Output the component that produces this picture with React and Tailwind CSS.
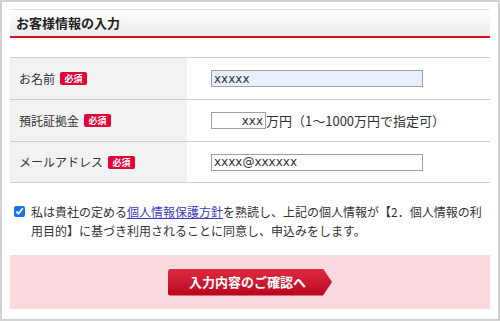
import React from "react";

function Badge() {
  return (
    <span className="ml-[5px] inline-flex h-[13px] w-[27px] items-center justify-center rounded-[2px] bg-[#e4003b] text-[9px] font-bold leading-none text-white">
      必須
    </span>
  );
}

function Row({ label, children, last }) {
  return (
    <div className={`flex h-[42px] border-t border-[#cfcfcf] ${last ? "border-b" : ""}`}>
      <div className="flex w-[177px] items-center bg-[#f2f2f2] pl-[9px] text-[12px] text-[#333]">
        <span>{label}</span>
        <Badge />
      </div>
      <div className="flex flex-1 items-center pl-[24px] text-[13px] text-[#333]">{children}</div>
    </div>
  );
}

const inputBase =
  "box-border h-[17px] border border-[#a0a0a0] px-[2px] font-['DejaVu_Sans',sans-serif] text-[12px] text-[#333] outline-none";

export default function App() {
  return (
    <div className="box-border flex h-[321px] w-[500px] flex-col border-2 border-[#d2d2d2] bg-white px-[8px] pt-[7px] font-['Noto_Sans_CJK_JP',sans-serif] text-[#333]">
      <div className="box-border flex h-[29px] items-center border-t border-b-2 border-t-[#e2e2e2] border-b-[#d3111f] bg-gradient-to-b from-white to-[#ebebeb] pl-[6px] text-[13px] font-bold text-[#222]">
        お客様情報の入力
      </div>

      <div className="mt-[19px]">
        <Row label="お名前">
          <input defaultValue="xxxxx" className={`${inputBase} w-[212px] bg-[#e8f0fe]`} />
        </Row>
        <Row label="預託証拠金">
          <input defaultValue="xxx" className={`${inputBase} w-[55px] bg-white text-right`} />
          <span className="whitespace-nowrap">万円（1～1000万円で指定可）</span>
        </Row>
        <Row label="メールアドレス" last>
          <input defaultValue="xxxx@xxxxxx" className={`${inputBase} w-[212px] bg-white`} />
        </Row>
      </div>

      <div className="mt-[19px] flex">
        <input
          type="checkbox"
          defaultChecked
          className="mt-[4px] ml-[4px] h-[11px] w-[11px] accent-[#1a73e8]"
        />
        <p className="ml-[6px] whitespace-nowrap text-[12px] leading-[19px] text-[#333]">
          私は貴社の定める
          <a href="#" className="text-[#3d3dbd] underline">
            個人情報保護方針
          </a>
          を熟読し、上記の個人情報が【2．個人情報の利
          <br />
          用目的】に基づき利用されることに同意し、申込みをします。
        </p>
      </div>

      <div className="mt-[15px] flex h-[54px] items-center justify-center bg-[#f8dadf]">
        <button className="flex h-[27px] w-[164px] items-center justify-center rounded-l-[3px] bg-gradient-to-b from-[#de2a42] to-[#b9001b] pr-[5px] text-[13px] font-bold text-white [clip-path:polygon(0_0,calc(100%-9px)_0,100%_50%,calc(100%-9px)_100%,0_100%)]">
          入力内容のご確認へ
        </button>
      </div>
    </div>
  );
}
